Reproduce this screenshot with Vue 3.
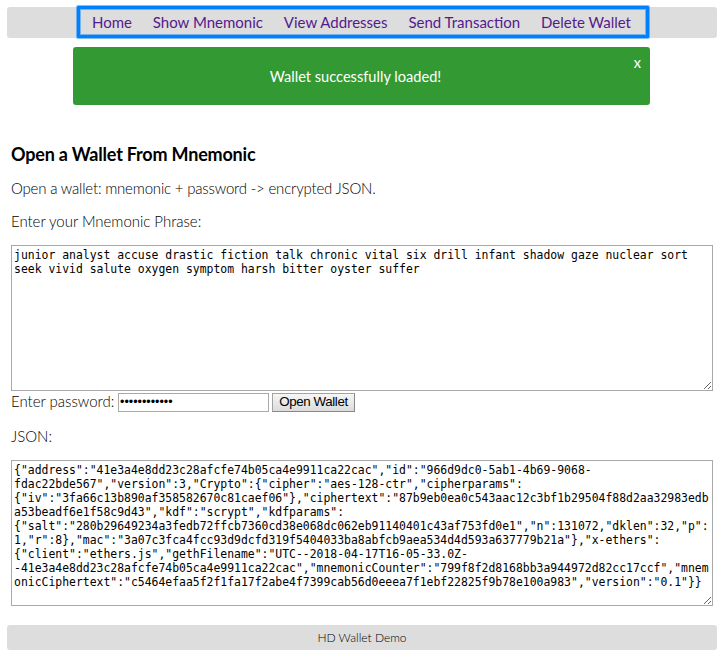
<script setup>
import { ref } from 'vue'

const links = ['Home', 'Show Mnemonic', 'View Addresses', 'Send Transaction', 'Delete Wallet']

const mnemonic = ref(
  [
    'junior analyst accuse drastic fiction talk chronic vital six drill infant shadow gaze nuclear sort',
    'seek vivid salute oxygen symptom harsh bitter oyster suffer'
  ].join('\n')
)

const password = '•'.repeat(12)

const json = ref(
  [
    '{"address":"41e3a4e8dd23c28afcfe74b05ca4e9911ca22cac","id":"966d9dc0-5ab1-4b69-9068-',
    'fdac22bde567","version":3,"Crypto":{"cipher":"aes-128-ctr","cipherparams":',
    '{"iv":"3fa66c13b890af358582670c81caef06"},"ciphertext":"87b9eb0ea0c543aac12c3bf1b29504f88d2aa32983edb',
    'a53beadf6e1f58c9d43","kdf":"scrypt","kdfparams":',
    '{"salt":"280b29649234a3fedb72ffcb7360cd38e068dc062eb91140401c43af753fd0e1","n":131072,"dklen":32,"p":',
    '1,"r":8},"mac":"3a07c3fca4fcc93d9dcfd319f5404033ba8abfcb9aea534d4d593a637779b21a"},"x-ethers":',
    '{"client":"ethers.js","gethFilename":"UTC--2018-04-17T16-05-33.0Z-',
    '-41e3a4e8dd23c28afcfe74b05ca4e9911ca22cac","mnemonicCounter":"799f8f2d8168bb3a944972d82cc17ccf","mnem',
    'onicCiphertext":"c5464efaa5f2f1fa17f2abe4f7399cab56d0eeea7f1ebf22825f9b78e100a983","version":"0.1"}}'
  ].join('\n')
)
</script>

<template>
  <div class="page">
    <header class="bar">
      <nav class="menu">
        <a v-for="link in links" :key="link" href="#">{{ link }}</a>
      </nav>
    </header>

    <div class="notice">
      <span>Wallet successfully loaded!</span>
      <span class="close">x</span>
    </div>

    <main class="content">
      <h3>Open a Wallet From Mnemonic</h3>
      <p class="intro">Open a wallet: mnemonic + password -&gt; encrypted JSON.</p>
      <p class="phrase">Enter your Mnemonic Phrase:</p>
      <textarea v-model="mnemonic" class="area" spellcheck="false"></textarea>
      <div class="row">
        <label class="pass">Enter password:</label>
        <div class="field">{{ password }}</div>
        <button class="open">Open Wallet</button>
      </div>
      <p class="json">JSON:</p>
      <textarea v-model="json" class="area" spellcheck="false"></textarea>
    </main>

    <footer class="footer"><span>HD Wallet Demo</span></footer>
  </div>
</template>

<style>
body {
  background: #fff;
}
</style>

<style scoped>
.page {
  box-sizing: border-box;
  width: 722px;
  height: 662px;
  padding: 7px 5px 0 7px;
  overflow: hidden;
  background: #fff;
  color: #000;
  font-family: Lato, sans-serif;
  font-weight: 300;
  font-size: 15px;
  line-height: 20px;
}
.bar {
  display: flex;
  height: 31px;
  background: #ddd;
  border-radius: 3px;
}
.menu {
  box-sizing: border-box;
  display: flex;
  align-items: center;
  justify-content: space-between;
  width: 572px;
  height: 32px;
  margin: -1px 0 0 70px;
  padding: 0 15px 1px 12px;
  border: 3px solid #0080ff;
  border-radius: 1px;
  box-shadow: 0 0 0 1px rgba(0, 128, 255, 0.5), inset 0 0 0 1px rgba(0, 128, 255, 0.45);
}
.menu a {
  color: #551a8b;
  font-size: 15px;
  font-weight: 400;
  text-decoration: none;
  white-space: nowrap;
}
.notice {
  position: relative;
  display: flex;
  align-items: center;
  justify-content: center;
  width: 577px;
  height: 58px;
  margin: 9px 0 0 66px;
  padding: 1px 12px 0 0;
  box-sizing: border-box;
  border-radius: 3px;
  background: #393;
  color: #fff;
  font-size: 14.6px;
  font-weight: 400;
}
.close {
  position: absolute;
  top: 6px;
  right: 9px;
}
.content {
  padding: 39px 4px 0;
}
h3 {
  margin: 0;
  font-size: 18px;
  font-weight: 700;
  line-height: 20px;
  letter-spacing: -0.2px;
}
p {
  margin: 0;
  white-space: nowrap;
}
.intro {
  margin-top: 14px;
  letter-spacing: -0.19px;
}
.phrase {
  margin-top: 13px;
  letter-spacing: -0.03px;
}
.area {
  display: block;
  box-sizing: border-box;
  width: 702px;
  height: 146px;
  margin: 14px 0 0;
  padding: 2px;
  border: 1px solid #a9a9a9;
  background: #fff;
  color: #000;
  font-family: "DejaVu Sans Mono", monospace;
  font-size: 11.43px;
  line-height: 14px;
  white-space: pre;
  overflow: hidden;
  outline: none;
  resize: both;
}
.row {
  display: flex;
  align-items: flex-start;
  height: 21px;
  padding-top: 2px;
  box-sizing: border-box;
}
.pass {
  width: 107px;
  margin-top: -2px;
  white-space: nowrap;
}
.field {
  box-sizing: border-box;
  width: 151px;
  height: 19px;
  padding: 0 1px;
  border: 1px solid #a9a9a9;
  font-family: "Liberation Sans", sans-serif;
  font-size: 12.5px;
  font-weight: 400;
  line-height: 17px;
}
.open {
  box-sizing: border-box;
  width: 83px;
  height: 19px;
  margin: 0 0 0 3px;
  padding: 0 0 1px;
  border: 1px solid #a3a3a3;
  border-right-color: #888;
  border-bottom-color: #888;
  border-radius: 0;
  background: linear-gradient(#f6f6f6, #dcdcdc);
  color: #000;
  font-family: "Liberation Sans", sans-serif;
  font-size: 13.33px;
  letter-spacing: -0.4px;
  line-height: 16px;
}
.json {
  margin-top: 14px;
}
.footer {
  display: flex;
  align-items: center;
  justify-content: center;
  height: 25px;
  margin-top: 19px;
  border-radius: 3px;
  background: #ddd;
  font-size: 12px;
}
</style>
